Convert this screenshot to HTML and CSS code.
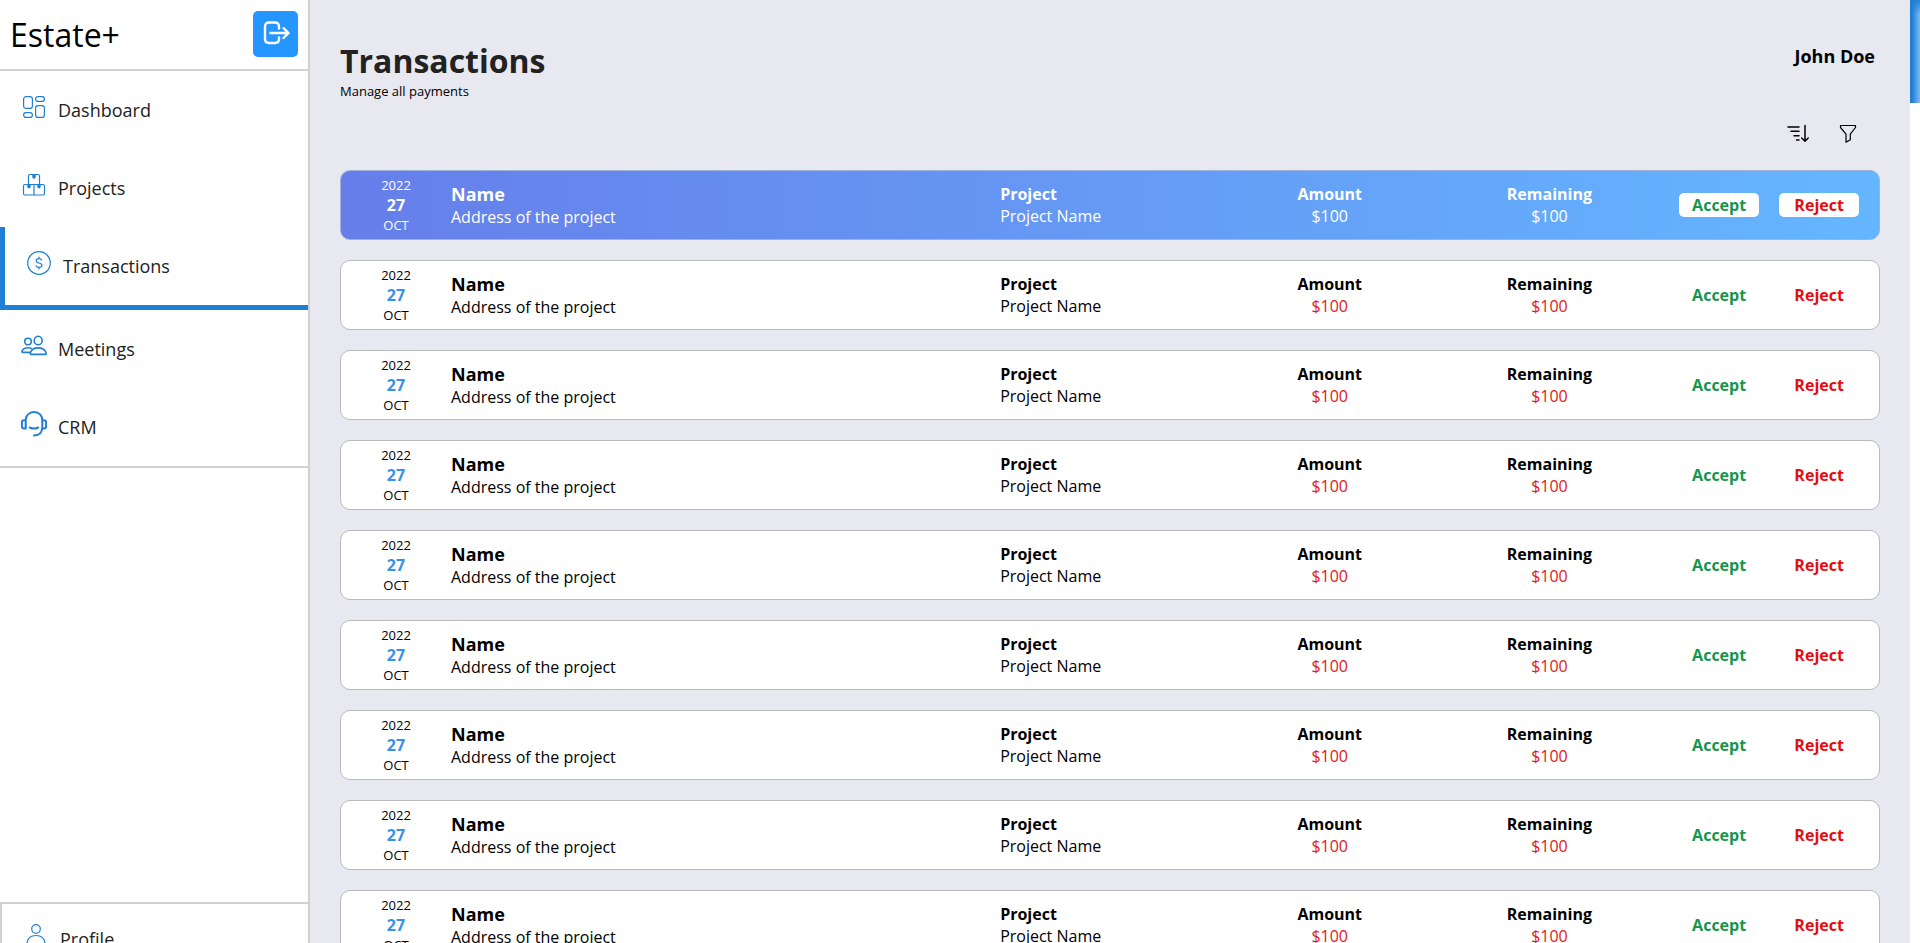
FILE: index.html
```html
<!DOCTYPE html>
<html lang="en">
<head>
<meta charset="utf-8">
<title>Estate+ | Transactions</title>
<link rel="stylesheet" href="styles.css">
</head>
<body>
<div class="app">
  <aside class="sidebar">
    <header class="brand">
      <span class="brand-name">Estate+</span>
      <button class="logout" type="button" aria-label="Log out">
        <svg viewBox="0 0 28 28" width="28" height="28" fill="none" stroke="#fff" stroke-width="2.400" stroke-linecap="round" stroke-linejoin="round"><path d="M17 8.500V6.500Q17 2.500 13 2.500H7Q3 2.500 3 6.500V19Q3 23 7 23H13Q17 23 17 19V17.500M8.500 13H26M21.500 8L26.500 13L21.500 18"/></svg>
      </button>
    </header>
    <nav class="menu">
      <a class="item" href="#dashboard"><svg class="icon" viewBox="0 0 26 26"><rect x="2.600" y="2.600" width="8.800" height="11.800" rx="2.500"/><rect x="14.600" y="2.600" width="8.800" height="4.800" rx="2.300"/><rect x="2.600" y="18.600" width="8.800" height="4.800" rx="2.300"/><rect x="14.600" y="11.600" width="8.800" height="11.800" rx="2.500"/></svg>Dashboard</a>
      <a class="item" href="#projects"><svg class="icon" viewBox="0 0 26 26"><path d="M7.500 12.500V4Q7.500 2.500 9 2.500H17Q18.500 2.500 18.500 4V12.500M4 12.500H22Q23.500 12.500 23.500 14V21.500Q23.500 23 22 23H4Q2.500 23 2.500 21.500V14Q2.500 12.500 4 12.500ZM13 12.500V23"/><path class="solid" d="M11.300 3H14.700V5.500L13 7L11.300 5.500ZM6.300 12.500H9.700V15.200L8 16.700L6.300 15.200ZM16.300 12.500H19.700V15.200L18 16.700L16.300 15.200Z"/></svg>Projects</a>
      <a class="item active" href="#transactions" aria-current="page"><svg class="icon" viewBox="0 0 26 26"><circle cx="13" cy="13" r="11.300"/><path d="M15.700 10Q15.200 8.700 13 8.700Q10.200 8.700 10.200 10.800Q10.200 12.500 13 13Q15.900 13.500 15.900 15.300Q15.900 17.400 13 17.400Q10.500 17.400 10 15.800M13 7V8.700M13 17.400V19"/></svg>Transactions</a>
      <a class="item" href="#meetings"><svg class="icon medium" viewBox="0 0 26 26"><circle cx="7" cy="8.500" r="3.300"/><ellipse cx="17.200" cy="7.500" rx="4" ry="4.300"/><path d="M9.800 21.400Q9 21.400 9.500 19.500Q11 14.900 17.200 14.900T25 19.500Q25.500 21.400 24.500 21.400ZM8.500 19.400H1.500Q.8 19.400 1.100 18Q2.500 14.800 7 14.800Q9 14.800 10.200 15.400"/></svg>Meetings</a>
      <a class="item" href="#crm"><svg class="icon bold" viewBox="0 0 26 26"><path d="M4.700 9.200C4.700 4.500 8 1.100 13 1.100S21.300 4.500 21.300 9.200V16.500Q21 24.300 13 24.600M4.700 9.200V17.400H3Q.9 17.400 .9 15.400V11.200Q.9 9.200 3 9.200ZM21.300 9.200H23Q25.100 9.200 25.100 11.200V15.400Q25.100 17.400 23 17.400H21.300M8.800 16.500Q13 18.700 17.200 16.500"/></svg>CRM</a>
    </nav>
    <footer class="account">
      <a class="item profile" href="#profile"><svg class="icon" viewBox="0 0 26 26"><circle cx="13" cy="6" r="4.300"/><path d="M4 23V20.500Q4.700 12.500 13 12.500T22 20.500V23Z"/></svg>Profile</a>
    </footer>
  </aside>

  <main class="content">
    <header class="page-head">
      <div>
        <h1 class="title">Transactions</h1>
        <p class="subtitle">Manage all payments</p>
      </div>
      <span class="user">John Doe</span>
    </header>
    <div class="tools">
      <button class="tool" type="button" aria-label="Sort"><svg viewBox="0 0 24 20" width="24" height="20" fill="none" stroke="#000" stroke-width="1.500" stroke-linecap="round" stroke-linejoin="round"><path d="M2 3H13M5 7.300H13M8 11.700H13M10.500 16H13M19 1.500V17M15.700 14L19 17.200L22.200 14"/></svg></button>
      <button class="tool" type="button" aria-label="Filter"><svg viewBox="0 0 24 20" width="24" height="20" fill="none" stroke="#000" stroke-width="1.200" stroke-linejoin="round"><path d="M4.500 1.500H19.500V3.500L14.300 10.200V15.700L10 18.200V10.200L4.500 3.500Z"/></svg></button>
    </div>
    <div class="list" id="list"></div>
  </main>
  <div class="scroll-track"><div class="scroll-thumb"></div></div>
</div>

<template id="row">
  <article class="card">
    <div class="who">
      <time class="date" datetime="2022-10-27"><span>2022</span><b class="day">27</b><span>OCT</span></time>
      <div><h2 class="name">Name</h2><p class="text">Address of the project</p></div>
    </div>
    <div><h3 class="label">Project</h3><p class="text">Project Name</p></div>
    <div class="money"><h3 class="label">Amount</h3><p class="text sum">$100</p></div>
    <div class="money"><h3 class="label">Remaining</h3><p class="text sum">$100</p></div>
    <div class="actions"><button class="action accept" type="button">Accept</button><button class="action reject" type="button">Reject</button></div>
  </article>
</template>
<script src="script.js"></script>
</body>
</html>
```
FILE: script.js
```js
const list = document.getElementById('list');
const row = document.getElementById('row');
for (let i = 0; i < 9; i++) {
  const card = row.content.cloneNode(true);
  if (i === 0) card.querySelector('.card').classList.add('highlight');
  list.append(card);
}
```
FILE: styles.css
```css
* { box-sizing: border-box; }
body { margin: 0; font-family: "Open Sans", sans-serif; font-size: 16px; color: #000; }
h1, h2, h3, p { margin: 0; }
button { font: inherit; border: 0; padding: 0; cursor: pointer; }
.app { display: flex; height: 100vh; overflow: hidden; background: #fff; }

.sidebar { flex: 0 0 310px; display: flex; flex-direction: column; border-right: 2px solid #d0d0d2; }
.brand { display: flex; align-items: center; justify-content: space-between; height: 71px; padding: 0 10px 1px; border-bottom: 2px solid #d0d0d2; }
.brand-name { font-size: 32px; font-weight: 400; }
.logout { display: grid; place-items: center; width: 45px; height: 46px; border-radius: 5px; background: #2596ff; }
.menu { border-bottom: 2px solid #d0d0d2; }
.item { display: flex; align-items: center; gap: 11px; height: 78px; padding-left: 21px; font-size: 18px; font-weight: 400; color: #222; text-decoration: none; }
.active { height: 83px; border-left: 5px solid #1f7fd4; border-bottom: 5px solid #1f7fd4; }
.icon { width: 26px; height: 26px; margin-bottom: 6px; fill: none; stroke: #1f7fd4; stroke-width: 1.2; stroke-linejoin: round; stroke-linecap: round; }
.medium { stroke-width: 1.6; }
.bold { stroke-width: 2; }
.solid { fill: #1f7fd4; stroke: none; }
.account { flex: 0 0 41px; min-height: 0; height: 41px; margin-top: auto; border-top: 2px solid #d0d0d2; border-left: 2px solid #d0d0d2; }
.profile { height: 70px; }

.content { flex: 1; padding: 40px 30px 0; background: #e8e8f1; overflow: hidden; }
.page-head { display: flex; justify-content: space-between; }
.title { font-size: 32px; line-height: 42px; color: #222; }
.subtitle { font-size: 13px; line-height: 18px; }
.user { padding: 4px 5px 0 0; font-size: 18px; line-height: 24px; font-weight: 700; }
.tools { display: flex; justify-content: flex-end; gap: 26px; padding: 24px 20px 26px; }
.tool { display: flex; background: none; }

.list { display: flex; flex-direction: column; gap: 20px; }
.card { display: grid; grid-template-columns: 3fr 1fr 1fr 1fr 1fr; align-items: center; height: 70px; border: 1px solid #b9b9be; border-radius: 10px; background: #fff; }
.who { display: flex; align-items: center; }
.date { display: flex; flex-direction: column; align-items: center; width: 110px; font-size: 13px; line-height: 20px; }
.day { font-size: 16px; color: #3a8fe8; }
.name { font-size: 18px; line-height: 24px; font-weight: 700; }
.label { font-size: 16px; line-height: 22px; font-weight: 700; }
.text { line-height: 22px; font-weight: 400; }
.money { text-align: center; }
.sum { color: #e01818; }
.actions { display: flex; justify-content: center; gap: 20px; }
.action { width: 80px; height: 24px; border-radius: 5px; background: #fff; font-weight: 700; line-height: 24px; }
.accept { color: #14964d; }
.reject { color: #e80c0c; }
.highlight { background: linear-gradient(90deg, #667eea, #64b6ff) border-box; border-color: #9fb3da; color: #fff; }
.highlight .day, .highlight .sum { color: #fff; }

.scroll-track { flex: 0 0 10px; background: #fff; }
.scroll-thumb { height: 103px; background: linear-gradient(#1f7fd4, transparent 14px), linear-gradient(90deg, #1f7fd4 20%, #7fb9f5); }
```
